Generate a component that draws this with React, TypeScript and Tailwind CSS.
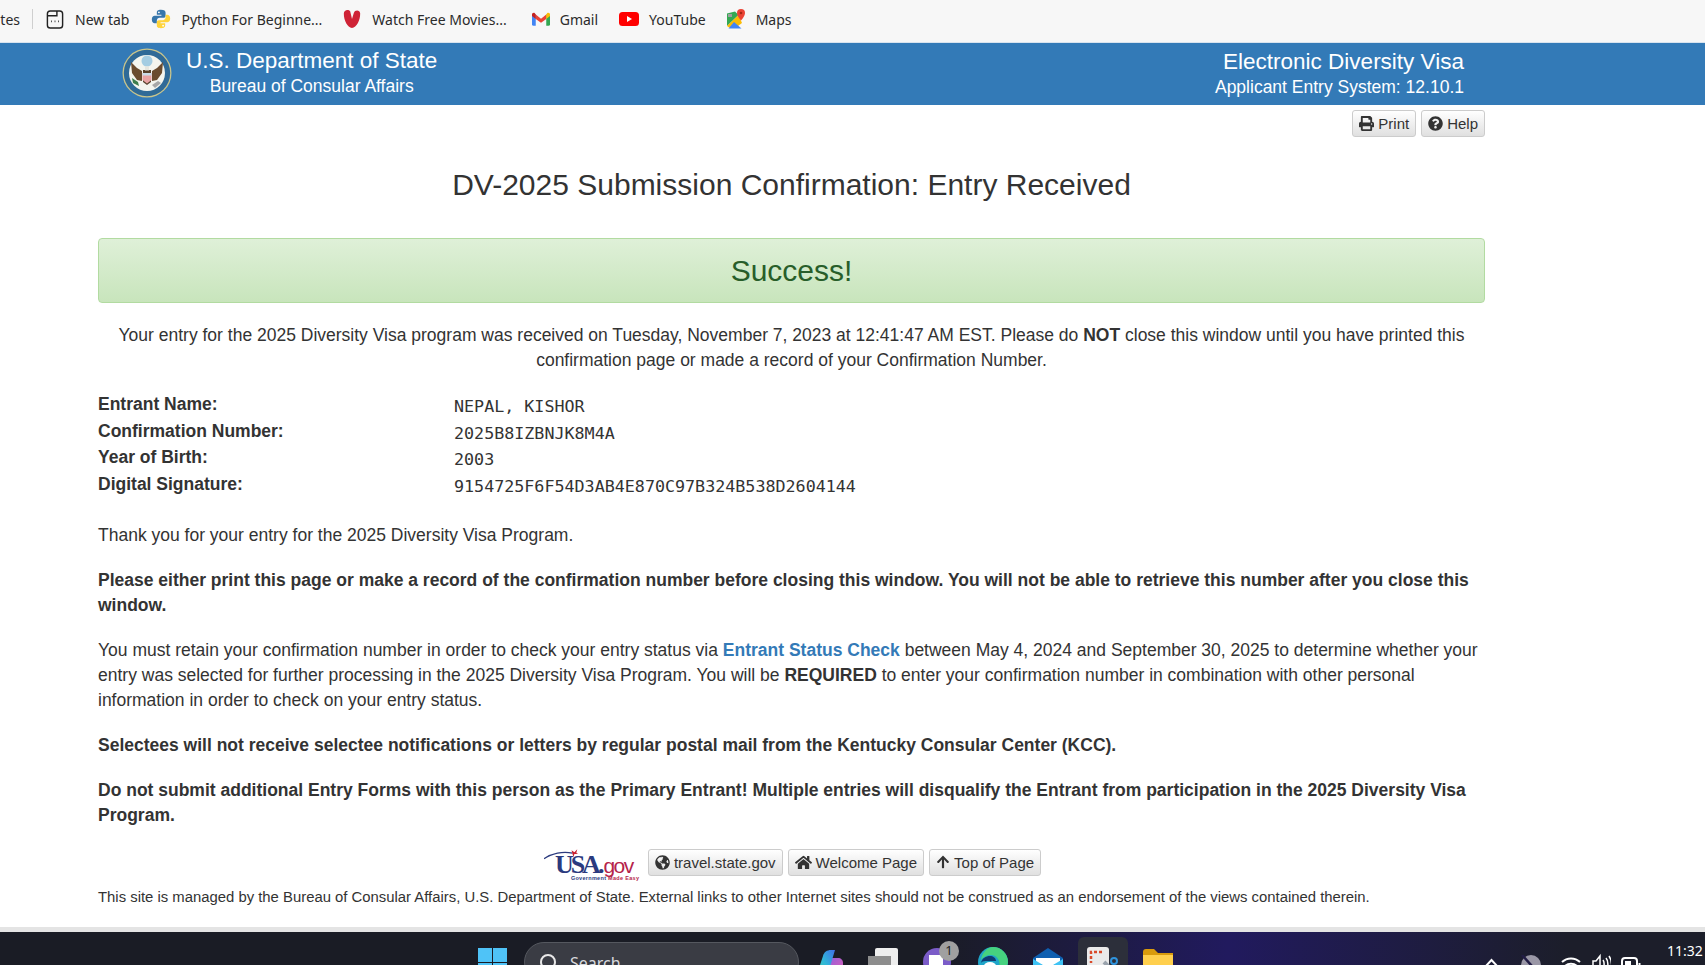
import { FaArrowUp, FaGlobeAmericas, FaHome, FaPrint, FaQuestionCircle } from 'react-icons/fa';
import type { ReactNode } from 'react';

function Btn({ icon, children }: { icon: ReactNode; children: ReactNode }) {
  return (
    <span className="inline-flex h-[27px] items-center gap-[4px] rounded-[3px] border border-[#ccc] bg-gradient-to-b from-white to-[#e0e0e0] px-[6px] text-[15px] text-[#333]">
      {icon}
      {children}
    </span>
  );
}

function PythonIcon() {
  return (
    <svg viewBox="0 0 24 24" className="size-[20px]">
      <path fill="#3776ab" d="M12 1C8 1 7 2.500 7 4.500V7h5.500v1H4.500C2.500 8 1 9.500 1 12.500S2.500 17 4.500 17H7v-3c0-2 1.500-3.500 3.500-3.500H15c1.500 0 2.500-1 2.500-2.500V4.500C17.500 2.500 16 1 12 1z" />
      <path fill="#ffd43b" d="M12 23c4 0 5-1.500 5-3.500V17h-5.500v-1h8c2 0 3.500-1.500 3.500-4.500S21.500 7 19.500 7H17.500v3c0 2-1.500 3.500-3.500 3.500H9.500C8 13.500 7 14.500 7 16v3.500C7 21.500 8 23 12 23z" />
      <circle cx="9.500" cy="4" r="1.100" fill="#fff" />
      <circle cx="14.500" cy="20" r="1.100" fill="#fff" />
    </svg>
  );
}

function GmailIcon() {
  return (
    <svg viewBox="0 0 24 18" className="h-[14px] w-[18px]">
      <path fill="#4285f4" d="M0 3h5v15H2a2 2 0 0 1-2-2z" />
      <path fill="#34a853" d="M19 3h5v13a2 2 0 0 1-2 2h-3z" />
      <path fill="#ea4335" d="M5 3l7 5.500L19 3v6l-7 5-7-5z" />
      <path fill="#fbbc04" d="M19 3l1.500-2c1.500-1 3.500 0 3.500 2v2l-5 4z" />
      <path fill="#c5221f" d="M5 3L3.500 1C2 0 0 1 0 3v2l5 4z" />
    </svg>
  );
}

function MapsIcon() {
  return (
    <svg viewBox="0 0 20 20" className="size-[20px]">
      <path fill="#34a853" d="M1 4.500l8-2 3.500 3.500L1 17z" />
      <path fill="#fbbc04" d="M1 17L12.500 6l3.500 8-6 4.500H3z" />
      <path fill="#4285f4" d="M8 13l7.500 6.500H2.500z" />
      <path fill="#9e9e9e" d="M2 5h4v3H2z" />
      <path fill="#ea4335" d="M15 0a4 4 0 0 1 4 4c0 3-4 7.500-4 7.500S11 7 11 4a4 4 0 0 1 4-4z" />
      <circle cx="15" cy="4" r="1.300" fill="#a52714" />
    </svg>
  );
}

function YoutubeIcon() {
  return (
    <svg viewBox="0 0 20 14" className="h-[14px] w-[20px]">
      <rect width="20" height="14" rx="3.500" fill="#f00" />
      <path d="M8 4l5 3-5 3z" fill="#fff" />
    </svg>
  );
}

function Seal() {
  return (
    <svg viewBox="0 0 50 50" className="-mt-[2px] size-[50px] shrink-0">
      <circle cx="25" cy="25" r="24.500" fill="#c9c58c" />
      <circle cx="25" cy="25" r="23.200" fill="#2f6a97" />
      <circle cx="25" cy="25" r="18" fill="#f4f5ee" />
      <circle cx="25" cy="13" r="5.500" fill="#a4cde2" />
      <path fill="#6a4c2e" d="M9 14l6 6 5 3v10l-5-1-5-7zM41 14l-6 6-5 3v10l5-1 5-7z" />
      <path fill="#57412a" d="M21 22h8v12l-4 3-4-3z" />
      <path fill="#e6e6de" d="M23 18.500h4v4h-4z" />
      <path fill="#e8a3a3" d="M20.500 25h9v7l-4.500 3.500-4.500-3.500z" />
      <path fill="#c9dce8" d="M20.500 25h9v2.500h-9z" />
      <path fill="#3e7d4d" d="M10 30l6 4 1 4-6-3z" />
      <path fill="#a7a7a7" d="M30 37l6-4 3 2-6 5z" />
    </svg>
  );
}

function UsaGov() {
  return (
    <span className="relative flex h-[30px] w-[101px] items-baseline pl-[13px] pt-[5px] leading-none">
      <span className="font-['Liberation_Serif',serif] text-[26px] font-bold tracking-[-3px] text-[#2b3a7e]">USA.</span>
      <span className="ml-[2px] font-['Liberation_Sans',sans-serif] text-[21px] tracking-[-1.500px] text-[#b5234a]">gov</span>
      <svg viewBox="0 0 40 12" className="absolute left-[2px] top-[2px] h-[12px] w-[38px]">
        <path d="M0 10C8 4 20 2 30 4" stroke="#2b3a7e" strokeWidth="1.400" fill="none" />
        <path d="M29 1l3 2 3-3-1 4 2 1-4 0-1 3-1-3z" fill="#c8202f" />
      </svg>
      <span className="absolute left-[29px] top-[28px] whitespace-nowrap text-[5.500px] leading-[6px] font-bold tracking-[0.3px] text-[#2b3a7e]">
        Government <span className="text-[#b5234a]">Made Easy</span>
      </span>
    </span>
  );
}

function Bookmark({ icon, label, className }: { icon: ReactNode; label: string; className: string }) {
  return (
    <span className={className}>
      {icon}
      <span>{label}</span>
    </span>
  );
}

function Toolbar() {
  return (
    <div className="flex h-[42px] items-center overflow-hidden bg-[#f7f7f7] pb-[4px] font-['Noto_Sans',sans-serif] text-[14px] text-[#2b2b2b]">
      <span className="w-[20px] shrink-0 overflow-hidden whitespace-nowrap text-right">tes</span>
      <span className="ml-[12px] h-[20px] w-px bg-[#cfcfcf]" />
      <div className="ml-[13px] flex items-center gap-[20px]">
        <Bookmark
          className="flex items-center gap-[11px]"
          label="New tab"
          icon={
            <svg viewBox="0 0 18 20" className="h-[19px] w-[18px]" fill="none" stroke="#222" strokeWidth="1.500">
              <rect x="1" y="1" width="16" height="18" rx="3" />
              <path d="M1 6h10V1" />
              <path d="M5 12h.8M8.600 12h.8M12.200 12h.8" strokeWidth="2" />
            </svg>
          }
        />
        <Bookmark className="ml-[2px] flex items-center gap-[10px]" label="Python For Beginne..." icon={<PythonIcon />} />
        <Bookmark
          className="flex items-center gap-[10px]"
          label="Watch Free Movies..."
          icon={
            <svg viewBox="0 0 20 22" className="h-[20px] w-[20px]">
              <path fill="#cf2336" d="M1 5C1 1 6 0 8 2.500L10 11l2-6.500C13 .500 19 1 19 5c0 8-4 15-9 16C5 20 1 13 1 5z" />
            </svg>
          }
        />
        <Bookmark className="ml-[5px] flex items-center gap-[10px]" label="Gmail" icon={<GmailIcon />} />
        <Bookmark className="ml-[1px] flex items-center gap-[10px]" label="YouTube" icon={<YoutubeIcon />} />
        <Bookmark className="flex items-center gap-[10px]" label="Maps" icon={<MapsIcon />} />
      </div>
    </div>
  );
}

function Header() {
  return (
    <div className="flex h-[63px] justify-between border-t border-[#d8e3ee] bg-[#337ab7] pl-[122px] pr-[241px] text-white">
      <div className="flex items-center gap-[14px]">
        <Seal />
        <div className="-mt-[3px]">
          <div className="text-[22.500px] leading-[28px]">U.S. Department of State</div>
          <div className="text-center text-[17.500px] leading-[23px]">Bureau of Consular Affairs</div>
        </div>
      </div>
      <div className="-mt-[2px] flex flex-col justify-center text-right">
        <div className="text-[22.500px] leading-[28px]">Electronic Diversity Visa</div>
        <div className="text-[17.500px] leading-[23px]">Applicant Entry System: 12.10.1</div>
      </div>
    </div>
  );
}

function Row({ label, value }: { label: string; value: string }) {
  return (
    <div className="flex h-[26.500px]">
      <b className="w-[356px] shrink-0">{label}</b>
      <span className="pt-[2px] font-['DejaVu_Sans_Mono',monospace] text-[16.700px]">{value}</span>
    </div>
  );
}

function Taskbar() {
  return (
    <div className="flex h-[33px] items-start overflow-hidden bg-[linear-gradient(90deg,#1a1c25_0%,#1a1c25_55%,#211a5e_72%,#1c1e2a_92%)] text-white">
      {/* start button */}
      <svg viewBox="0 0 29 29" className="ml-[478px] mt-[16px] size-[29px] shrink-0">
        <path fill="#4fc3f7" d="M0 0h14v14H0zM15 0h14v14H15zM0 15h14v14H0zM15 15h14v14H15z" />
      </svg>
      <div className="ml-[17px] mt-[10px] flex h-[40px] w-[275px] shrink-0 items-start rounded-[20px] border border-[#55585f] bg-[#3a3c44] pl-[14px] pt-[10px] font-['Noto_Sans',sans-serif] text-[16px] leading-[20px] text-[#d8dade]">
        <svg viewBox="0 0 20 20" className="size-[20px]" fill="none" stroke="#e8e8e8" strokeWidth="2">
          <circle cx="9" cy="9" r="7" />
        </svg>
        <span className="ml-[11px]">Search</span>
      </div>
      {/* copilot */}
      <svg viewBox="0 0 27 27" className="ml-[17px] mt-[18px] size-[27px] shrink-0">
        <defs>
          <linearGradient id="copilotLeft" x1="0" y1="1" x2="1" y2="0">
            <stop offset="0" stopColor="#4ccf8f" />
            <stop offset="0.5" stopColor="#2fb7d9" />
            <stop offset="1" stopColor="#3f6fe8" />
          </linearGradient>
          <linearGradient id="copilotRight" x1="0" y1="0" x2="1" y2="1">
            <stop offset="0" stopColor="#8a5fe0" />
            <stop offset="1" stopColor="#e85fb0" />
          </linearGradient>
        </defs>
        <path fill="url(#copilotRight)" d="M13 8h9c3 0 5 2 5 5v14H9z" />
        <path fill="url(#copilotLeft)" d="M0 27L7 6c1-4 4-6 8-6h4l-8 27z" />
      </svg>
      {/* files */}
      <div className="relative ml-[25px] mt-[16px] h-[24px] w-[30px] shrink-0">
        <div className="ml-[7px] h-[30px] w-[23px] rounded-[2px] bg-[#eeeeee]" />
        <div className="absolute left-0 top-[8px] size-[23px] bg-[#8d8d8d]" />
      </div>
      {/* teams with badge */}
      <div className="relative ml-[25px] mt-[9px] h-[30px] w-[36px] shrink-0">
        <div className="absolute left-0 top-[7px] size-[28px] rounded-full bg-[#7b5cc8]" />
        <div className="absolute left-[6px] top-[14px] h-[16px] w-[14px] bg-white" />
        <span className="absolute right-0 top-0 flex size-[20px] items-center justify-center rounded-full bg-[#a0a0a0] font-['Noto_Sans',sans-serif] text-[13px] text-[#222]">1</span>
      </div>
      {/* edge */}
      <svg viewBox="0 0 30 30" className="ml-[19px] mt-[15px] size-[30px] shrink-0">
        <circle cx="15" cy="15" r="15" fill="#1fa5c9" />
        <path fill="#46d27f" d="M15 0a15 15 0 0 1 15 15c0 3-2 5-5 5h-4c2-6-2-12-8-12C9 8 5 10 3 13 4 6 9 0 15 0z" />
        <path fill="#0f3c73" d="M3 16c1-5 5-7 9-7 3 0 6 2 6 5H10c-3 0-6 0-7 2z" />
        <ellipse cx="12" cy="19" rx="6" ry="4" fill="#fff" />
      </svg>
      {/* mail */}
      <svg viewBox="0 0 30 30" className="ml-[25px] mt-[16px] size-[30px] shrink-0">
        <path fill="#0f5fb0" d="M15 0l15 10v4H0v-4z" />
        <path fill="#ffffff" d="M3 10h24v4l-12 6-12-6z" />
        <path fill="#3ec3f5" d="M0 11l15 9 15-9v19H0z" />
      </svg>
      {/* snipping tool, active */}
      <div className="ml-[15px] mt-[5px] flex h-[60px] w-[50px] shrink-0 justify-center rounded-[6px] bg-[#2c2f3a] pt-[10px]">
        <svg viewBox="0 0 32 30" className="h-[30px] w-[32px]">
          <rect x="0" y="0" width="22" height="28" rx="3" fill="#eaeaea" />
          <path d="M15 5H4v11" fill="none" stroke="#d94a2a" strokeWidth="2.500" strokeDasharray="3 2" />
          <path d="M17 15l6 6" stroke="#9aa3ad" strokeWidth="4" />
          <circle cx="27" cy="14" r="3" fill="none" stroke="#2f93dc" strokeWidth="2" />
        </svg>
      </div>
      {/* folder */}
      <svg viewBox="0 0 30 30" className="ml-[15px] mt-[17px] size-[30px] shrink-0">
        <path fill="#d99a0c" d="M0 3c0-2 1-3 3-3h8l4 4h15v6H0z" />
        <path fill="#ffcf4d" d="M0 6h30v24H0z" />
      </svg>
      {/* tray */}
      <svg viewBox="0 0 15 10" className="ml-[311px] mt-[26px] h-[10px] w-[15px] shrink-0" fill="none" stroke="#fff" strokeWidth="2">
        <path d="M1 9l6.500-7L14 9" />
      </svg>
      <svg viewBox="0 0 20 20" className="ml-[22px] mt-[23px] size-[20px] shrink-0">
        <circle cx="10" cy="10" r="10" fill="#9a97a6" />
        <path d="M1 0l18 20" stroke="#221d45" strokeWidth="2.500" />
      </svg>
      <svg viewBox="0 0 20 20" className="ml-[20px] mt-[23px] size-[20px] shrink-0" fill="none" stroke="#fff" strokeWidth="2">
        <path d="M1 7a13 13 0 0 1 18 0M4 11a9 9 0 0 1 12 0M7 15a4.500 4.500 0 0 1 6 0" />
      </svg>
      <svg viewBox="0 0 19 20" className="ml-[11px] mt-[21px] h-[20px] w-[19px] shrink-0" fill="none" stroke="#fff" strokeWidth="1.500">
        <path d="M1 8h3l4-5v17l-4-5H1zM11 7c1.500 2 1.500 6 0 8M14 5c2.500 3 2.500 9 0 12M17 3c3.500 5 3.500 12 0 16" />
      </svg>
      <svg viewBox="0 0 20 20" className="ml-[10px] mt-[25px] size-[20px] shrink-0" fill="none" stroke="#fff" strokeWidth="2">
        <rect x="1" y="1" width="15" height="18" rx="3" />
        <path d="M18.500 6v5" />
        <path d="M4 4h6v14H4z" fill="#fff" stroke="none" />
      </svg>
      <span className="ml-[26px] mt-[10px] shrink-0 font-['Noto_Sans',sans-serif] text-[14px] leading-[18px]">11:32</span>
    </div>
  );
}

export default function App() {
  return (
    <div className="flex h-[965px] w-[1705px] flex-col overflow-hidden bg-white font-['Liberation_Sans',Arial,sans-serif] text-[#333]">
      <Toolbar />
      <Header />
      <main className="ml-[98px] h-[822px] w-[1387px] text-[17.500px] leading-[25px]">
        <div className="flex justify-end gap-[5px] pt-[5px]">
          <Btn icon={<FaPrint className="text-[15px]" />}>Print</Btn>
          <Btn icon={<FaQuestionCircle className="text-[15px]" />}>Help</Btn>
        </div>
        <h1 className="mt-[28px] text-center text-[30px] leading-[40px]">DV-2025 Submission Confirmation: Entry Received</h1>
        <div className="mt-[33px] flex h-[65px] items-center justify-center rounded-[4px] border border-[#b2dba1] bg-gradient-to-b from-[#dff0d8] to-[#c8e5bc] text-[30px] text-[#285e2a]">Success!</div>
        <p className="mt-[20px] text-center">
          Your entry for the 2025 Diversity Visa program was received on Tuesday, November 7, 2023 at 12:41:47 AM EST. Please do <b>NOT</b> close this window until you have printed this confirmation page or made a record of your Confirmation Number.
        </p>
        <div className="mt-[19px]">
          <Row label="Entrant Name:" value="NEPAL, KISHOR" />
          <Row label="Confirmation Number:" value="2025B8IZBNJK8M4A" />
          <Row label="Year of Birth:" value="2003" />
          <Row label="Digital Signature:" value="9154725F6F54D3AB4E870C97B324B538D2604144" />
        </div>
        <p className="mt-[25px]">Thank you for your entry for the 2025 Diversity Visa Program.</p>
        <p className="mt-[20px] font-bold">Please either print this page or make a record of the confirmation number before closing this window. You will not be able to retrieve this number after you close this window.</p>
        <p className="mt-[20px]">
          You must retain your confirmation number in order to check your entry status via <b className="text-[#337ab7]">Entrant Status Check</b> between May 4, 2024 and September 30, 2025 to determine whether your entry was selected for further processing in the 2025 Diversity Visa Program. You will be <b>REQUIRED</b> to enter your confirmation number in combination with other personal information in order to check on your entry status.
        </p>
        <p className="mt-[20px] font-bold">Selectees will not receive selectee notifications or letters by regular postal mail from the Kentucky Consular Center (KCC).</p>
        <p className="mt-[20px] font-bold">Do not submit additional Entry Forms with this person as the Primary Entrant! Multiple entries will disqualify the Entrant from participation in the 2025 Diversity Visa Program.</p>
        <div className="mt-[19px] flex items-center justify-center gap-[5px]">
          <UsaGov />
          <Btn icon={<FaGlobeAmericas className="text-[15px]" />}>travel.state.gov</Btn>
          <Btn icon={<FaHome className="text-[17px]" />}>Welcome Page</Btn>
          <Btn icon={<FaArrowUp className="text-[14px]" />}>Top of Page</Btn>
        </div>
        <p className="mt-[10px] whitespace-nowrap text-[14.875px] leading-[20px]">This site is managed by the Bureau of Consular Affairs, U.S. Department of State. External links to other Internet sites should not be construed as an endorsement of the views contained therein.</p>
      </main>
      <div className="mt-auto h-[5px] bg-[#e4e4e4]" />
      <Taskbar />
    </div>
  );
}
